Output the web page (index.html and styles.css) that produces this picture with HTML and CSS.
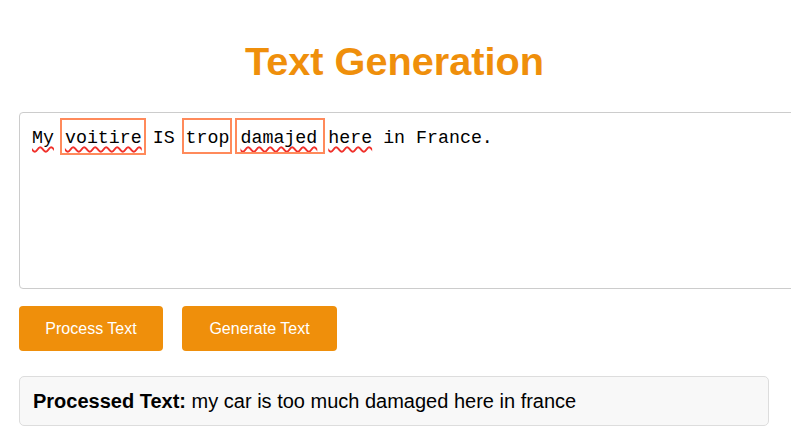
FILE: index.html
```html
<!DOCTYPE html>
<html lang="en">
<head>
<meta charset="utf-8">
<title>Text Generation</title>
<link rel="stylesheet" href="styles.css">
</head>
<body>
<div class="page">
  <h1 class="title">Text Generation</h1>
  <div class="editor-wrap">
    <div class="editor" contenteditable="true" spellcheck="false"><span class="misspelled">My</span> <span class="misspelled">voitire</span> IS trop <span class="misspelled">damajed</span> <span class="misspelled">here</span> in France.</div>
    <span class="mark mark-voitire"></span>
    <span class="mark mark-trop"></span>
    <span class="mark mark-damajed"></span>
  </div>
  <div class="actions">
    <button class="btn btn-process">Process Text</button>
    <button class="btn btn-generate">Generate Text</button>
  </div>
  <div class="result"><strong>Processed Text:</strong> my car is too much damaged here in france</div>
</div>
</body>
</html>
```

FILE: styles.css
```css
html, body {
  margin: 0;
  padding: 0;
  overflow: hidden;
  background: #ffffff;
}

.page {
  padding: 39px 0 0 19px;
  font-family: "Liberation Sans", Arial, sans-serif;
  color: #000;
}

.title {
  margin: 0 0 0 -21px;
  text-align: center;
  font-size: 39.7px;
  font-weight: bold;
  line-height: 45px;
  color: #ef8f0b;
}

.editor-wrap {
  position: relative;
  margin-top: 28px;
  width: 800px;
}

.editor {
  box-sizing: border-box;
  height: 177px;
  border: 1px solid #cccccc;
  border-radius: 4px;
  padding: 12px 12px;
  font-family: "Liberation Mono", "DejaVu Sans Mono", monospace;
  font-size: 18.3px;
  line-height: 27px;
  color: #000;
  outline: none;
  white-space: pre-wrap;
}

.misspelled {
  text-decoration: underline wavy #f0302a;
  text-decoration-thickness: 1.5px;
  text-underline-offset: 3px;
  text-decoration-skip-ink: none;
}

.mark {
  position: absolute;
  box-sizing: border-box;
  border: 2px solid #ff8a5b;
  pointer-events: none;
}

.mark-voitire { left: 41px; top: 6px; width: 86px; height: 37px; }
.mark-trop { left: 163px; top: 6px; width: 50px; height: 36px; }
.mark-damajed { left: 216px; top: 6px; width: 90px; height: 36px; }

.actions {
  display: flex;
  gap: 19px;
  margin-top: 17px;
}

.btn {
  height: 45px;
  padding: 0;
  border: none;
  border-radius: 4px;
  background: #ef8f0b;
  color: #ffffff;
  font-family: "Liberation Sans", Arial, sans-serif;
  font-size: 16px;
  text-align: center;
}

.btn-process { width: 144px; }
.btn-generate { width: 155px; }

.result {
  box-sizing: border-box;
  width: 750px;
  margin-top: 25px;
  padding: 12px 13px;
  border: 1px solid #dddddd;
  border-radius: 5px;
  background: #f8f8f8;
  font-size: 20px;
  line-height: 24px;
}
```
